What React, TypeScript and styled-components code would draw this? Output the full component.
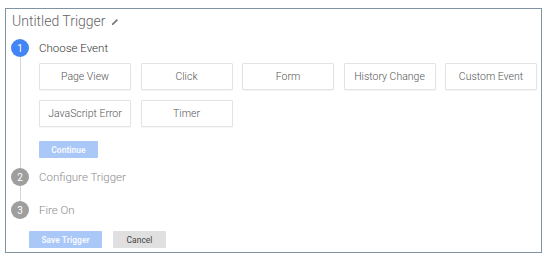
import React from "react";
import styled, { createGlobalStyle } from "styled-components";

const GlobalStyle = createGlobalStyle`
	html, body {
		margin: 0;
		padding: 0;
		background: #ffffff;
	}
	body {
		font-family: Roboto, "Liberation Sans", Arial, sans-serif;
	}
`;

const Frame = styled.div`
	box-sizing: border-box;
	margin: 8px 0 0 5px;
	width: 537px;
	height: 245px;
	border: 1.5px solid #7f93a2;
	padding: 0 0 0 5px;
	background: #ffffff;
`;

const TitleRow = styled.div`
	display: flex;
	align-items: center;
	gap: 5px;
	height: 23px;
	padding: 0 0 0 1px;
	color: #666;
	font-size: 14px;
	font-weight: 300;
`;

const Steps = styled.div`
	display: flex;
	flex-direction: column;
	margin-top: 7px;
`;

const StepRow = styled.div`
	display: grid;
	grid-template-columns: 18px 1fr;
	column-gap: 10px;
`;

const Marker = styled.div`
	display: flex;
	flex-direction: column;
	align-items: center;
`;

const Circle = styled.div<{ $active?: boolean }>`
	width: 18px;
	height: 18px;
	border-radius: 50%;
	background: ${(p) => (p.$active ? "#4285f4" : "#9e9e9e")};
	color: #fff;
	font-size: 10px;
	display: flex;
	align-items: center;
	justify-content: center;
	flex-shrink: 0;
`;

const Rail = styled.div`
	flex: 1;
	width: 1px;
	background: #d6d6d6;
`;

const StepBody = styled.div<{ $pad: number }>`
	padding-bottom: ${(p) => p.$pad}px;
`;

const StepLabel = styled.div<{ $active?: boolean }>`
	height: 18px;
	display: flex;
	align-items: center;
	font-size: 11.5px;
	font-weight: 300;
	color: ${(p) => (p.$active ? "#333" : "#8a8a8a")};
`;

const EventGrid = styled.div`
	display: grid;
	grid-template-columns: repeat(5, 92px);
	grid-auto-rows: 27px;
	column-gap: 9.5px;
	row-gap: 10px;
	margin-top: 6px;
`;

const EventButton = styled.div`
	box-sizing: border-box;
	border: 1px solid #e3e3e3;
	border-radius: 1px;
	box-shadow: 0 1px 1px rgba(0, 0, 0, 0.04);
	display: flex;
	align-items: center;
	justify-content: center;
	font-size: 10.5px;
	font-weight: 300;
	color: #555;
`;

const SmallButton = styled.div<{ $kind: "primary" | "plain"; $w: number }>`
	width: ${(p) => p.$w}px;
	height: 17px;
	display: flex;
	align-items: center;
	justify-content: center;
	font-size: 8.5px;
	font-weight: ${(p) => (p.$kind === "primary" ? 700 : 400)};
	color: ${(p) => (p.$kind === "primary" ? "#f4f8ff" : "#444")};
	background: ${(p) => (p.$kind === "primary" ? "#a9c7f7" : "#e0e0e0")};
	border-radius: 1px;
`;

const ContinueWrap = styled.div`
	margin-top: 14px;
`;

const Footer = styled.div`
	display: flex;
	gap: 11px;
	margin: 12px 0 0 18px;
`;

const Pencil = () => (
	<svg width="8" height="8" viewBox="0 0 8 8" style={{ marginTop: 2 }}>
		<path d="M0.8 7.2 L1.2 5.6 L5.8 1 L7 2.2 L2.4 6.8 Z" fill="#777" />
	</svg>
);

const events = [
	"Page View",
	"Click",
	"Form",
	"History Change",
	"Custom Event",
	"JavaScript Error",
	"Timer",
];

export default function App() {
	return (
		<>
			<GlobalStyle />
			<Frame>
				<TitleRow>
					Untitled Trigger
					<Pencil />
				</TitleRow>
				<Steps>
					<StepRow>
						<Marker>
							<Circle $active>1</Circle>
							<Rail />
						</Marker>
						<StepBody $pad={10}>
							<StepLabel $active>Choose Event</StepLabel>
							<EventGrid>
								{events.map((e) => (
									<EventButton key={e}>{e}</EventButton>
								))}
							</EventGrid>
							<ContinueWrap>
								<SmallButton $kind="primary" $w={59}>
									Continue
								</SmallButton>
							</ContinueWrap>
						</StepBody>
					</StepRow>
					<StepRow>
						<Marker>
							<Circle>2</Circle>
							<Rail />
						</Marker>
						<StepBody $pad={15}>
							<StepLabel>Configure Trigger</StepLabel>
						</StepBody>
					</StepRow>
					<StepRow>
						<Marker>
							<Circle>3</Circle>
						</Marker>
						<StepBody $pad={0}>
							<StepLabel>Fire On</StepLabel>
						</StepBody>
					</StepRow>
				</Steps>
				<Footer>
					<SmallButton $kind="primary" $w={73}>
						Save Trigger
					</SmallButton>
					<SmallButton $kind="plain" $w={53}>
						Cancel
					</SmallButton>
				</Footer>
			</Frame>
		</>
	);
}
